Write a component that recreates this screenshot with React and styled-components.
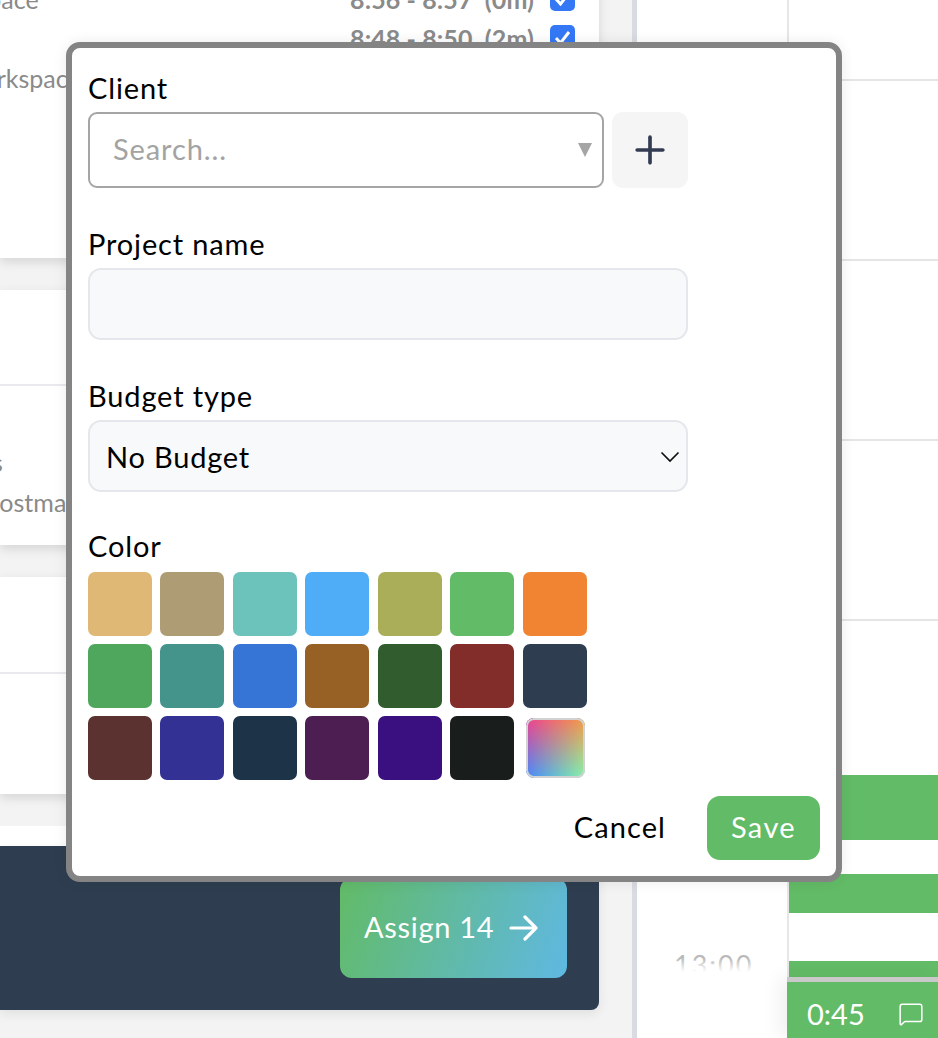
import React from "react";
import styled, { createGlobalStyle } from "styled-components";
import { MessageSquare, Plus } from "lucide-react";

const Global = createGlobalStyle`
  html, body { margin: 0; padding: 0; background: #f3f3f3; }
  body { font-family: Lato, "Open Sans", sans-serif; }
  * { box-sizing: border-box; }
`;

const Page = styled.div`
  position: relative; width: 938px; height: 1038px; overflow: hidden;
  display: flex; background: #f3f3f3;
`;

/* left column */
const LeftColumn = styled.div`
  width: 599px; flex: none; display: flex; flex-direction: column; margin-top: -21px;
`;
const Card = styled.div`
  background: #fff; height: ${p => p.$h}px; margin-bottom: ${p => p.$gap || 0}px;
  box-shadow: ${p => p.$shadow ? "0 4px 10px rgba(0,0,0,.12)" : "none"};
  flex: none; display: flex; flex-direction: column;
`;
const Row = styled.div`
  height: ${p => p.$h}px; flex: none; display: flex; align-items: center;
  border-bottom: ${p => p.$line ? "2px solid #e9e9ee" : "0"};
  color: #8a8a8a; font-size: 25px; padding-right: 24px;
`;
const Cut = styled.span`
  margin-left: ${p => p.$left}px; white-space: nowrap;
`;
const Time = styled.span`
  margin-left: auto; font-size: 25px; font-weight: 700; color: #8a8a8a; white-space: pre; letter-spacing: .1px;
`;
const Check = styled.span`
  width: 25px; height: 25px; margin-left: 16px; border-radius: 5px; background: #3478f6;
  display: flex; align-items: center; justify-content: center; flex: none;
`;
const Footer = styled.div`
  height: 164px; background: #2e3e50; border-radius: 0 0 8px 0; flex: none;
  display: flex; justify-content: flex-end; padding: 32px 32px 32px 0;
  box-shadow: 0 4px 12px rgba(0,0,0,.08);
`;
const Assign = styled.div`
  width: 227px; height: 100px; border-radius: 12px; color: #fff;
  background: linear-gradient(110deg, #62bb66, #5fb8e2);
  display: flex; align-items: center; gap: 15px; padding: 0 0 3px 24px;
  font-size: 29px; letter-spacing: .7px;
  svg { flex: none; margin-top: 2px; }
`;

/* right side */
const Gutter = styled.div`
  width: 38px; flex: none; border-right: 5px solid #d8dce0;
`;
const TimeColumn = styled.div`
  position: relative; width: 152px; flex: none; background: #fff;
  border-right: 2px solid #e6e6e6;
`;
const Hour = styled.span`
  position: absolute; left: 37px; top: 948px; font-size: 27px; color: #b9b9b9; letter-spacing: 2px;
`;
const Fade = styled.div`
  position: absolute; left: 0; right: 0; top: 958px; bottom: 0;
  background: linear-gradient(#ffffff00, #fff 14px);
`;
const Grid = styled.div`
  position: relative; flex: 1; background: #fff; overflow: hidden;
`;
const GridRow = styled.div`
  height: ${p => p.$h}px; border-bottom: 2px solid #e5e5e5;
`;
const Event = styled.div`
  position: absolute; left: 0; right: 0; top: ${p => p.$top}px; height: ${p => p.$h}px; background: #62bb66;
`;
const Chip = styled.div`
  position: absolute; left: 787px; right: 0; top: 977px; height: 61px;
  background: #62bb66; border-top: 5px solid #c9c9c9; color: #fff; font-size: 29px;
  display: flex; align-items: center; gap: 33px; padding: 7px 0 0 20px;
  box-shadow: -8px 0 18px rgba(0,0,0,.06);
`;

/* modal */
const Modal = styled.div`
  position: absolute; left: 66px; top: 42px; width: 776px; height: 840px;
  background: #fff; border: 6px solid #848484; border-radius: 14px;
  padding: 20px 16px 16px; display: flex; flex-direction: column;
  box-shadow: 0 0 14px rgba(0,0,0,.08);
  color: #000;
`;
const Label = styled.label`
  display: block; font-size: 29px; letter-spacing: .85px; line-height: 40px; height: 40px;
  margin-bottom: ${p => p.$mb ?? 4}px;
`;
const ClientRow = styled.div`
  display: flex; gap: 8px; margin-bottom: 36px;
`;
const SearchBox = styled.div`
  position: relative; width: 516px; height: 76px;
`;
const SearchInput = styled.input`
  width: 100%; height: 100%; border: 2px solid #a5a5a5; border-radius: 9px; background: #fff;
  font: inherit; font-size: 29px; letter-spacing: .9px; padding: 0 23px 3px; outline: none;
  &::placeholder { color: #a3a3a3; opacity: 1; }
`;
const Caret = styled.span`
  position: absolute; right: 12px; top: 31px; width: 0; height: 0;
  border-left: 7.5px solid transparent; border-right: 7.5px solid transparent; border-top: 14px solid #a5a5a5;
`;
const AddButton = styled.button`
  width: 76px; height: 76px; border: 0; border-radius: 11px; background: #f5f5f5; color: #333b52;
  display: flex; align-items: center; justify-content: center; padding: 0;
`;
const TextField = styled.input`
  display: block; width: 600px; height: 72px; border: 2px solid #e6e7ec; border-radius: 13px;
  background: #f8f9fb; margin-bottom: 36px; outline: none;
`;
const SelectBox = styled.div`
  position: relative; width: 600px; height: 72px; margin-bottom: 34px;
`;
const Select = styled.select`
  appearance: none; width: 100%; height: 100%; border: 2px solid #e6e7ec; border-radius: 13px;
  background: #f8f9fb; font: inherit; font-size: 29px; letter-spacing: .8px; color: #000;
  padding: 0 16px; outline: none;
`;
const SelectIcon = styled.svg`
  position: absolute; right: 8px; top: 31px;
`;
const Swatches = styled.div`
  display: grid; grid-template-columns: repeat(7, 64px); column-gap: 8.45px; row-gap: 8px;
`;
const Swatch = styled.div`
  height: 64px; border-radius: 7px; background: ${p => p.$c};
`;
const RainbowSwatch = styled.div`
  position: relative; width: 59px; height: 60px; margin: 2px 0 2px 3px; border-radius: 8px; overflow: hidden;
  background: linear-gradient(to right, #4389ff, #84f7aa);
  &::after {
    content: ""; position: absolute; inset: 0;
    background: linear-gradient(to right, #f0408f, #f59a46);
    -webkit-mask-image: linear-gradient(to bottom, #000, transparent);
    mask-image: linear-gradient(to bottom, #000, transparent);
  }
  &::before {
    content: ""; position: absolute; inset: 0; z-index: 1; border: 2px solid #d2d2d2; border-radius: 8px;
  }
`;
const Actions = styled.div`
  display: flex; justify-content: flex-end; align-items: center; gap: 41px; margin-top: 16px;
`;
const Cancel = styled.button`
  border: 0; background: none; font: inherit; font-size: 29px; letter-spacing: 1.1px; color: #000;
  padding: 0 0 3px;
`;
const Save = styled.button`
  width: 113px; height: 64px; border: 0; border-radius: 13px; background: #62bb66; color: #fff;
  font: inherit; font-size: 29px; letter-spacing: 1.4px; padding: 0 0 3px;
`;

const colors = [
  "#dfb876", "#ae9c75", "#6cc3bb", "#4eadf6", "#aaae58", "#62bb66", "#f08433",
  "#4fa65d", "#44948c", "#3675d6", "#976024", "#305c2e", "#832d2a", "#2e3e50",
  "#5b322f", "#333194", "#1c3348", "#4d1e52", "#3a1080", "#191d1b",
];

const Tick = () => (
  <svg width="17" height="15" viewBox="0 0 17 15" fill="none">
    <path d="M2 8l4.5 5L15 2" stroke="#fff" strokeWidth="3" />
  </svg>
);

export default function App() {
  return (
    <Page>
      <Global />
      <LeftColumn>
        <Card $h={279} $gap={32} $shadow>
          <Row $h={39}>
            <Cut $left={-84}>Workspace</Cut>
            <Time>8:56 - 8:57  (0m)</Time>
            <Check><Tick /></Check>
          </Row>
          <Row $h={39}>
            <Time>8:48 - 8:50  (2m)</Time>
            <Check><Tick /></Check>
          </Row>
          <Row $h={42}>
            <Cut $left={-42}>Workspace</Cut>
          </Row>
        </Card>
        <Card $h={255} $gap={32} $shadow>
          <Row $h={96} $line />
          <Row $h={64} />
          <Row $h={24}><Cut $left={-8}>s</Cut></Row>
          <Row $h={56}><Cut $left={-15}>Postman</Cut></Row>
        </Card>
        <Card $h={217} $gap={32} $shadow>
          <Row $h={97} $line />
        </Card>
        <Card $h={20} />
        <Footer>
          <Assign>
            Assign 14
            <svg width="29" height="26" viewBox="0 0 29 26" fill="none" stroke="currentColor" strokeWidth="3.2" strokeLinecap="round" strokeLinejoin="round">
              <path d="M2 13h25M16 2l11 11-11 11" />
            </svg>
          </Assign>
        </Footer>
      </LeftColumn>
      <Gutter />
      <TimeColumn>
        <Hour>13:00</Hour>
        <Fade />
      </TimeColumn>
      <Grid>
        <GridRow $h={81} />
        <GridRow $h={180} />
        <GridRow $h={180} />
        <GridRow $h={180} />
        <Event $top={775} $h={65} />
        <Event $top={874} $h={39} />
        <Event $top={961} $h={16} />
      </Grid>
      <Chip>
        0:45
        <MessageSquare size={26} strokeWidth={1.4} />
      </Chip>
      <Modal>
        <Label>Client</Label>
        <ClientRow>
          <SearchBox>
            <SearchInput placeholder="Search..." />
            <Caret />
          </SearchBox>
          <AddButton><Plus size={44} strokeWidth={2} /></AddButton>
        </ClientRow>
        <Label>Project name</Label>
        <TextField />
        <Label>Budget type</Label>
        <SelectBox>
          <Select defaultValue="none">
            <option value="none">No Budget</option>
          </Select>
          <SelectIcon width="20" height="12" viewBox="0 0 20 12" fill="none" stroke="#111" strokeWidth="1.7">
            <path d="M1.5 1.5L10 10l8.5-8.5" />
          </SelectIcon>
        </SelectBox>
        <Label $mb={6}>Color</Label>
        <Swatches>
          {colors.map(c => <Swatch key={c} $c={c} />)}
          <RainbowSwatch />
        </Swatches>
        <Actions>
          <Cancel>Cancel</Cancel>
          <Save>Save</Save>
        </Actions>
      </Modal>
    </Page>
  );
}
